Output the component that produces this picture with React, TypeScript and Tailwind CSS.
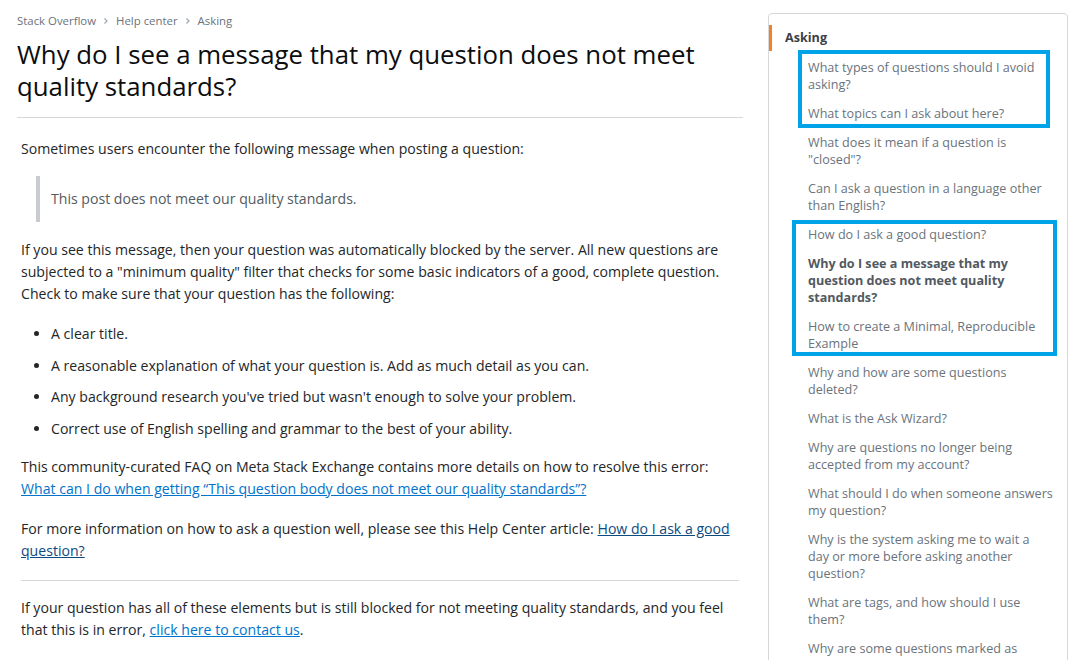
import React from 'react';

const sideItems: { text: string; bold?: boolean }[] = [
    { text: 'What types of questions should I avoid asking?' },
    { text: 'What topics can I ask about here?' },
    { text: 'What does it mean if a question is "closed"?' },
    { text: 'Can I ask a question in a language other than English?' },
    { text: 'How do I ask a good question?' },
    { text: 'Why do I see a message that my question does not meet quality standards?', bold: true },
    { text: 'How to create a Minimal, Reproducible Example' },
    { text: 'Why and how are some questions deleted?' },
    { text: 'What is the Ask Wizard?' },
    { text: 'Why are questions no longer being accepted from my account?' },
    { text: 'What should I do when someone answers my question?' },
    { text: 'Why is the system asking me to wait a day or more before asking another question?' },
    { text: 'What are tags, and how should I use them?' },
    { text: 'Why are some questions marked as duplicate?' },
];

const bullets = [
    'A clear title.',
    'A reasonable explanation of what your question is. Add as much detail as you can.',
    "Any background research you've tried but wasn't enough to solve your problem.",
    'Correct use of English spelling and grammar to the best of your ability.',
];

function Chevron() {
    return (
        <svg width="10" height="10" viewBox="0 0 10 10" className="mx-[5px]">
            <path d="M3.5 2.5 L6 5 L3.5 7.5" fill="none" stroke="#9fa6ad" strokeWidth="1.2" />
        </svg>
    );
}

export default function App() {
    return (
        <div
            className="h-[660px] overflow-hidden bg-white flex text-[#232629]"
            style={{ fontFamily: '"Segoe UI", "Open Sans", "Liberation Sans", sans-serif' }}
        >
            <main className="ml-[17px] w-[726px] shrink-0">
                <nav className="flex items-center pt-[13px] text-[11.4px] leading-[16px] text-[#6a737c]">
                    <span>Stack Overflow</span>
                    <Chevron />
                    <span>Help center</span>
                    <Chevron />
                    <span>Asking</span>
                </nav>
                <h1 className="mt-[9px] text-[25.8px] leading-[32px] font-normal text-[#0c0d0e] pb-[15px] border-b border-[#d6d9dc]">
                    Why do I see a message that my question does not meet quality standards?
                </h1>

                <div className="px-[4px] pt-[20px] text-[14.1px] leading-[22px]">
                    <p>Sometimes users encounter the following message when posting a question:</p>

                    <blockquote className="mt-[16px] ml-[15px] border-l-4 border-[#c8ccd0] pl-[11px] py-[12px] text-[#535a60]">
                        This post does not meet our quality standards.
                    </blockquote>

                    <p className="mt-[17px]">
                        If you see this message, then your question was automatically blocked by the server. All new questions are
                        subjected to a "minimum quality" filter that checks for some basic indicators of a good, complete question.
                        Check to make sure that your question has the following:
                    </p>

                    <ul className="mt-[18px] ml-[30px] list-disc flex flex-col gap-[9.5px]">
                        {bullets.map(b => (
                            <li key={b}>{b}</li>
                        ))}
                    </ul>

                    <p className="mt-[16px]">
                        This community-curated FAQ on Meta Stack Exchange contains more details on how to resolve this error:{' '}
                        <a className="text-[#0074cc] underline">
                            What can I do when getting “This question body does not meet our quality standards”?
                        </a>
                    </p>

                    <p className="mt-[18px]">
                        For more information on how to ask a question well, please see this Help Center article:{' '}
                        <a className="text-[#0c4a80] underline">How do I ask a good question?</a>
                    </p>

                    <hr className="mt-[18px] mb-[16px] border-[#d6d9dc]" />

                    <p>
                        If your question has all of these elements but is still blocked for not meeting quality standards, and you feel
                        that this is in error, <a className="text-[#0074cc] underline">click here to contact us</a>.
                    </p>
                </div>
            </main>

            <aside className="ml-[25px] mt-[13px] w-[300px] shrink-0 self-start relative border border-[#d6d9dc] rounded-[4px] h-[700px]">
                <div className="mt-[11px] border-l-[3px] border-[#f48225] pl-[13px] text-[12.6px] leading-[26px] font-bold text-[#3b4045]">
                    Asking
                </div>
                <ul className="mt-[8px] ml-[39px] mr-[14px] flex flex-col gap-[12px] text-[12.6px] leading-[17px] text-[#6a737c]">
                    {sideItems.map(item => (
                        <li key={item.text} className={item.bold ? 'font-bold text-[#525960]' : ''}>
                            {item.text}
                        </li>
                    ))}
                </ul>

                <div className="absolute left-[29px] top-[36px] w-[252px] h-[78px] border-4 border-[#00a3e8]" />
                <div className="absolute left-[23px] top-[206px] w-[265px] h-[136px] border-4 border-[#00a3e8]" />
            </aside>
        </div>
    );
}
